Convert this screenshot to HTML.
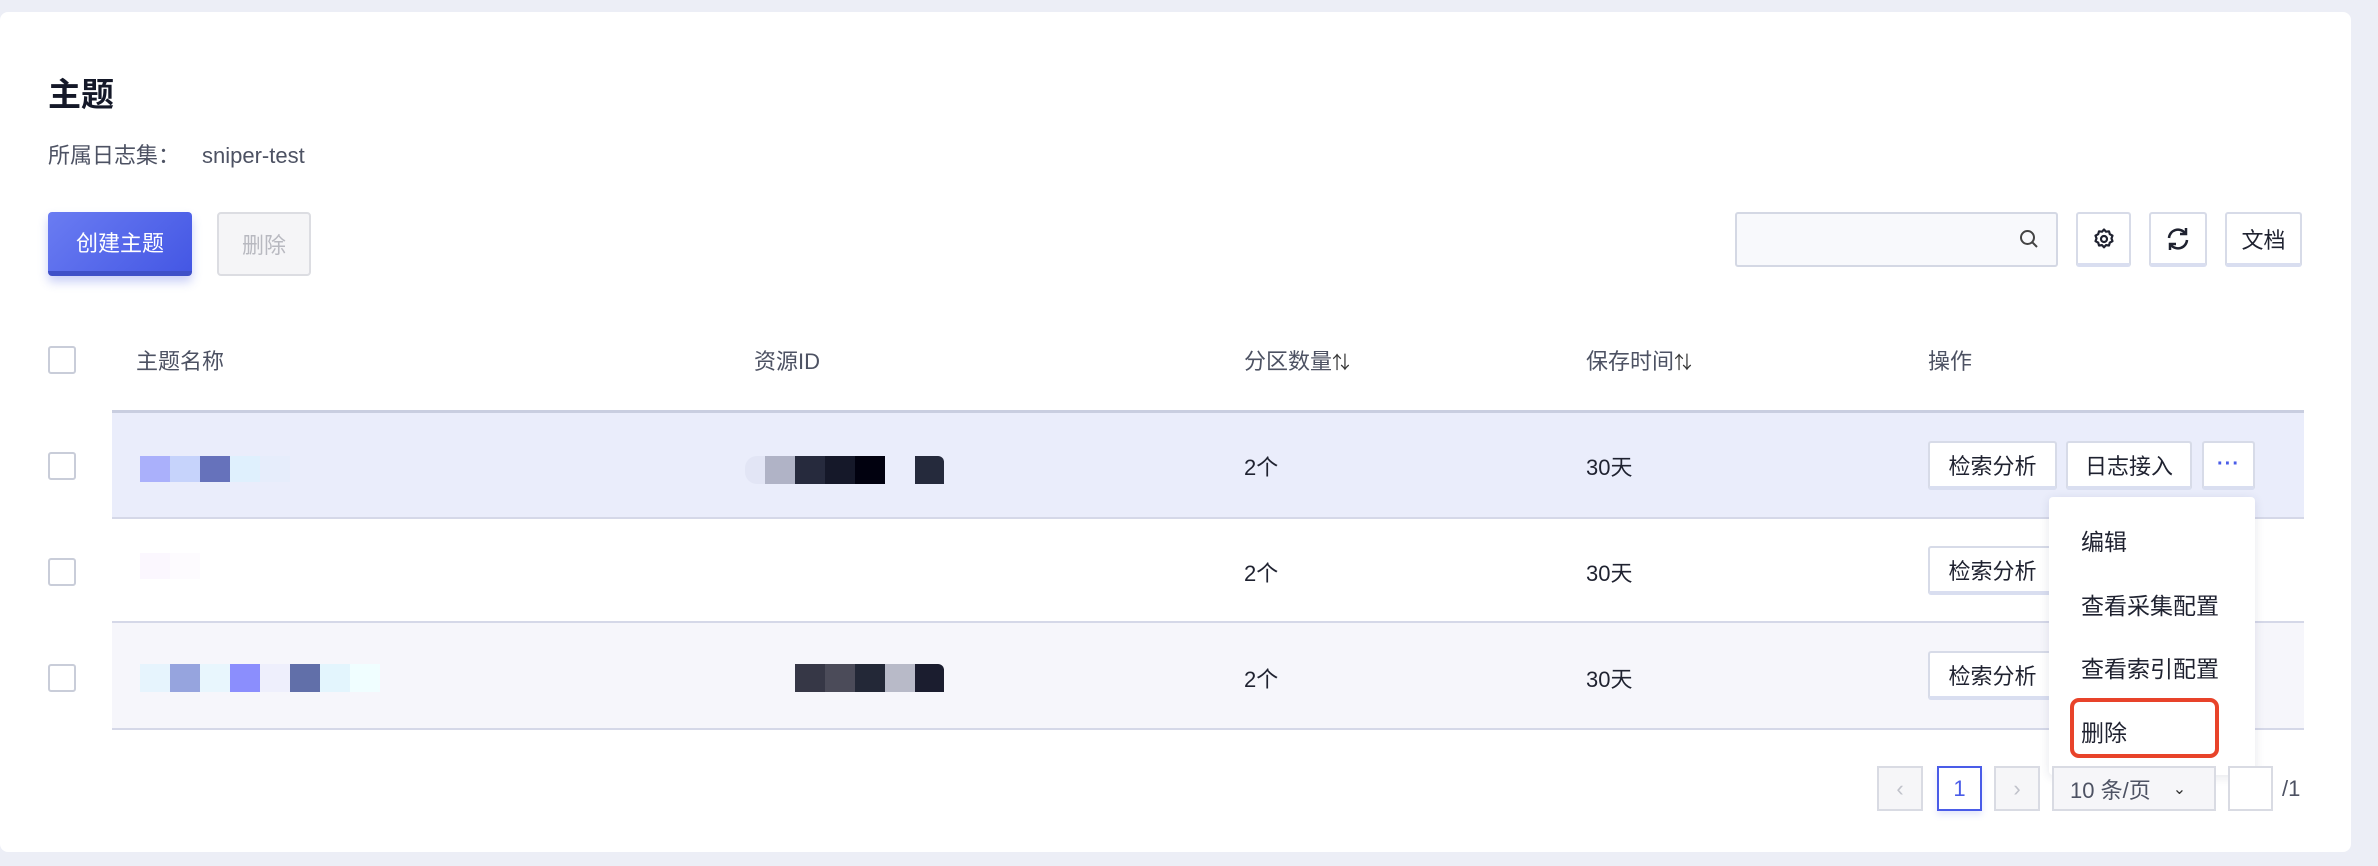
<!DOCTYPE html>
<html><head><meta charset="utf-8"><style>
*{box-sizing:border-box;margin:0;padding:0}
body{width:2378px;height:866px;background:#eceef6;font-family:"Liberation Sans","Noto Sans CJK SC",sans-serif;position:relative;overflow:hidden;color:#1f2230}
.card{position:absolute;left:0;top:12px;width:2351px;height:840px;background:#fff;border-radius:8px}
.a{position:absolute}
.btn{position:absolute;background:#fff;border:2px solid #d7dbe8;border-bottom:4px solid #d9def0;border-radius:3px;display:flex;align-items:center;justify-content:center;font-size:22px;color:#1f2230}
.sq{position:absolute;width:30px;height:26px}
.cb{position:absolute;left:48px;width:28px;height:28px;border:2px solid #c9cdd9;border-radius:3px;background:#fff}
.hd{position:absolute;top:344px;font-size:22px;color:#4d5263}
.cell{position:absolute;font-size:22px;color:#1f2230}
.mi{position:absolute;left:2081px;font-size:23px;color:#1f2230}
</style></head><body>
<div class="card"></div>
<div class="a" style="left:48px;top:68px;font-size:33px;font-weight:bold;color:#141828">主题</div>
<div class="a" style="left:48px;top:138px;font-size:22px;color:#4d5263">所属日志集：<span style="margin-left:22px">sniper-test</span></div>
<div class="a" style="left:48px;top:212px;width:144px;height:64px;border-radius:4px;background:linear-gradient(135deg,#6a7cf2,#4457e4);border-bottom:5px solid #3f50c8;box-shadow:0 6px 10px rgba(80,100,230,.3);color:#fff;font-size:22px;display:flex;align-items:center;justify-content:center">创建主题</div>
<div class="a" style="left:217px;top:212px;width:94px;height:64px;border-radius:4px;background:#f5f5f7;border:2px solid #dcdde2;color:#b8b9c0;font-size:22px;display:flex;align-items:center;justify-content:center">删除</div>
<div class="a" style="left:1735px;top:212px;width:323px;height:55px;border:2px solid #d4d8e4;border-radius:3px;background:#f8f9fc"></div>
<svg class="a" style="left:2018px;top:228px" width="22" height="22" viewBox="0 0 22 22"><circle cx="9.5" cy="9.5" r="6.5" fill="none" stroke="#444" stroke-width="2"/><path d="M14.5 14.5 19 19" stroke="#444" stroke-width="2"/></svg>
<div class="btn" style="left:2076px;top:212px;width:55px;height:55px"><svg width="24" height="24" viewBox="0 0 24 24"><path d="M12 2.5l2 2.2 3-.4.8 2.9 2.7 1.4-1 2.8 1 2.8-2.7 1.4-.8 2.9-3-.4-2 2.2-2-2.2-3 .4-.8-2.9-2.7-1.4 1-2.8-1-2.8 2.7-1.4.8-2.9 3 .4z" fill="none" stroke="#1f2230" stroke-width="2.2" stroke-linejoin="round"/><circle cx="12" cy="12" r="3" fill="none" stroke="#1f2230" stroke-width="2.2"/></svg></div>
<div class="btn" style="left:2149px;top:212px;width:58px;height:55px"><svg width="26" height="26" viewBox="0 0 26 26"><path d="M4 12a9 9 0 0 1 16-5M22 14a9 9 0 0 1-16 5" fill="none" stroke="#1f2230" stroke-width="2.5"/><path d="M21 2v6h-6M5 24v-6h6" fill="none" stroke="#1f2230" stroke-width="2.5"/></svg></div>
<div class="btn" style="left:2225px;top:212px;width:77px;height:55px">文档</div>

<div class="cb" style="top:346px"></div>
<div class="hd" style="left:136px">主题名称</div>
<div class="hd" style="left:754px">资源ID</div>
<div class="hd" style="left:1244px">分区数量<span style="font-size:18px;color:#333">⇅</span></div>
<div class="hd" style="left:1586px">保存时间<span style="font-size:18px;color:#333">⇅</span></div>
<div class="hd" style="left:1928px">操作</div>

<div class="a" style="left:112px;top:410px;width:2192px;height:109px;background:#eaedfb;border-top:3px solid #c9cee0;border-bottom:2px solid #d5d8e8"></div>
<div class="a" style="left:112px;top:519px;width:2192px;height:104px;background:#fff;border-bottom:2px solid #d5d8e8"></div>
<div class="a" style="left:112px;top:623px;width:2192px;height:107px;background:#f6f6fb;border-bottom:2px solid #d5d8e8"></div>

<div class="cb" style="top:452px"></div>
<div class="cb" style="top:558px"></div>
<div class="cb" style="top:664px"></div>

<div class="sq" style="left:140px;top:456px;background:#aab0fb"></div>
<div class="sq" style="left:170px;top:456px;background:#c6d3fb"></div>
<div class="sq" style="left:200px;top:456px;background:#6672bb"></div>
<div class="sq" style="left:230px;top:456px;background:#dff0fd"></div>
<div class="sq" style="left:260px;top:456px;background:#e6edfb"></div>
<div class="sq" style="left:745px;top:456px;height:28px;width:20px;background:#e2e5f5;border-radius:12px 0 0 12px"></div>
<div class="sq" style="left:765px;top:456px;height:28px;background:#b0b3c6"></div>
<div class="sq" style="left:795px;top:456px;height:28px;background:#262a3d"></div>
<div class="sq" style="left:825px;top:456px;height:28px;background:#151829"></div>
<div class="sq" style="left:855px;top:456px;height:28px;background:#01010f"></div>
<div class="sq" style="left:915px;top:456px;height:28px;width:29px;background:#252a3c;border-top-right-radius:6px"></div>

<div class="sq" style="left:140px;top:553px;background:#fbf7fe"></div>
<div class="sq" style="left:170px;top:553px;background:#fdfbfe"></div>

<div class="sq" style="left:140px;top:664px;height:28px;background:#e6f4fd"></div>
<div class="sq" style="left:170px;top:664px;height:28px;background:#96a4de"></div>
<div class="sq" style="left:200px;top:664px;height:28px;background:#e8f6fd"></div>
<div class="sq" style="left:230px;top:664px;height:28px;background:#8b8efd"></div>
<div class="sq" style="left:260px;top:664px;height:28px;background:#eeeffc"></div>
<div class="sq" style="left:290px;top:664px;height:28px;background:#616fa9"></div>
<div class="sq" style="left:320px;top:664px;height:28px;background:#e3f5fd"></div>
<div class="sq" style="left:350px;top:664px;height:28px;background:#f0feff"></div>
<div class="sq" style="left:795px;top:664px;height:28px;background:#363746"></div>
<div class="sq" style="left:825px;top:664px;height:28px;background:#4b4b59"></div>
<div class="sq" style="left:855px;top:664px;height:28px;background:#232837"></div>
<div class="sq" style="left:885px;top:664px;height:28px;background:#b8bac8"></div>
<div class="sq" style="left:915px;top:664px;height:28px;width:29px;background:#1b1d2f;border-top-right-radius:6px"></div>

<div class="cell" style="left:1244px;top:450px">2个</div>
<div class="cell" style="left:1586px;top:450px">30天</div>
<div class="cell" style="left:1244px;top:556px">2个</div>
<div class="cell" style="left:1586px;top:556px">30天</div>
<div class="cell" style="left:1244px;top:662px">2个</div>
<div class="cell" style="left:1586px;top:662px">30天</div>

<div class="btn" style="left:1928px;top:441px;width:129px;height:49px">检索分析</div>
<div class="btn" style="left:2066px;top:441px;width:126px;height:49px">日志接入</div>
<div class="btn" style="left:2202px;top:441px;width:53px;height:49px;color:#4a5ce8;font-size:20px;font-weight:bold;letter-spacing:1px">···</div>
<div class="btn" style="left:1928px;top:546px;width:129px;height:49px">检索分析</div>
<div class="btn" style="left:1928px;top:651px;width:129px;height:49px">检索分析</div>

<div class="a" style="left:2049px;top:497px;width:206px;height:278px;background:#fff;border-radius:4px;box-shadow:0 2px 10px rgba(40,50,90,.12)"></div>
<div class="mi" style="top:523px">编辑</div>
<div class="mi" style="top:587px">查看采集配置</div>
<div class="mi" style="top:650px">查看索引配置</div>
<div class="a" style="left:2070px;top:698px;width:149px;height:60px;border:4px solid #e8432a;border-radius:9px"></div>
<div class="mi" style="top:714px">删除</div>

<div class="a" style="left:1877px;top:766px;width:46px;height:45px;border:2px solid #d9dbe3;background:#f6f6f8;color:#c0c2ca;font-size:22px;display:flex;align-items:center;justify-content:center">‹</div>
<div class="a" style="left:1937px;top:766px;width:45px;height:45px;border:2px solid #4a5ce8;background:#fff;color:#4a5ce8;font-size:22px;display:flex;align-items:center;justify-content:center;box-shadow:0 4px 6px rgba(80,100,230,.15)">1</div>
<div class="a" style="left:1994px;top:766px;width:46px;height:45px;border:2px solid #d9dbe3;background:#f6f6f8;color:#c0c2ca;font-size:22px;display:flex;align-items:center;justify-content:center">›</div>
<div class="a" style="left:2052px;top:766px;width:164px;height:45px;border:2px solid #d9dbe3;background:#f6f6f9;color:#4d5263;font-size:22px;padding-left:16px;display:flex;align-items:center">10 条/页<span style="margin-left:22px;font-size:16px;color:#333">⌄</span></div>
<div class="a" style="left:2228px;top:766px;width:45px;height:45px;border:2px solid #d9dbe3;background:#fff"></div>
<div class="a" style="left:2282px;top:776px;font-size:22px;color:#4d5263">/1</div>
</body></html>
